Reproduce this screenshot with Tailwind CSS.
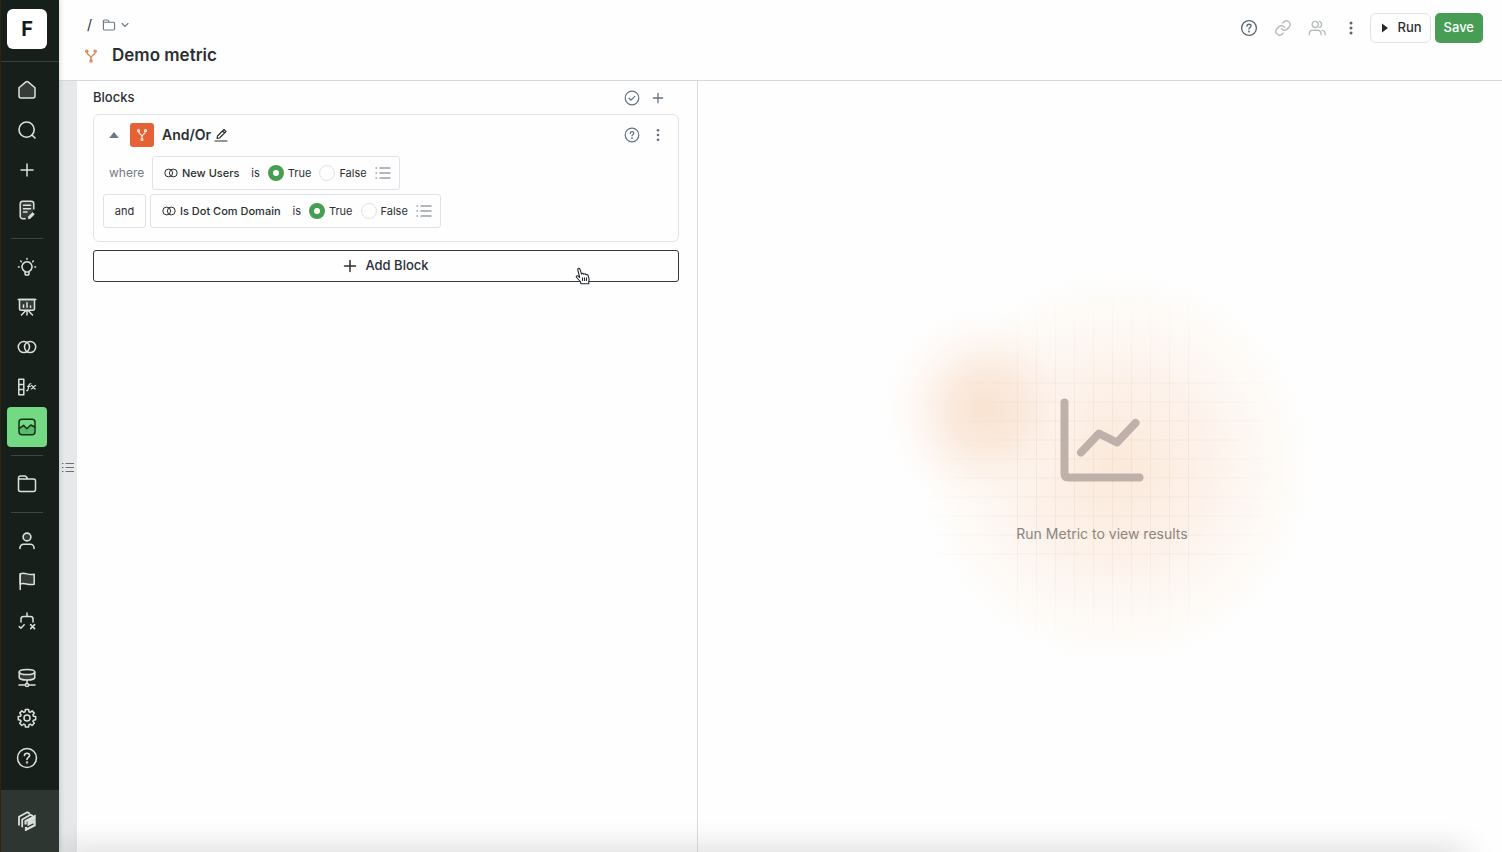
<!DOCTYPE html>
<html lang="en">
<head>
    <meta charset="UTF-8">
    <meta name="viewport" content="width=device-width, initial-scale=1.0">
    <title>Demo metric</title>
    <script src="https://cdn.jsdelivr.net/npm/@tailwindcss/browser@4"></script>
</head>
<body class="flex h-screen overflow-hidden bg-[#fefefe] font-['Inter','Liberation_Sans',sans-serif] text-[#2b2f33]">

    <!-- Sidebar -->
    <aside class="relative z-10 flex w-[59px] shrink-0 flex-col border-l border-[#2f2413] bg-[#161f19] text-[#dde1de] shadow-[0_0_6px_rgba(0,0,0,0.2)]">
        <div class="border-b border-[#3d4039] pt-[9px] pb-3 pl-[6px]">
            <a href="#" class="flex size-10 items-center justify-center rounded-md bg-white text-xl font-bold text-[#16191c]">F</a>
        </div>
        <nav class="flex grow flex-col pt-2 pl-[6px]">
            <a href="#" aria-label="Home" class="flex size-10 items-center justify-center">
                <svg class="size-5" viewBox="0 0 20 20" fill="none" stroke="currentColor" stroke-width="1.5" stroke-linejoin="round"><path fill="#363d38" d="M2 7.8 8.9 1.9a1.7 1.7 0 0 1 2.2 0L18 7.8V16a2 2 0 0 1-2 2H4a2 2 0 0 1-2-2z"/></svg>
            </a>
            <a href="#" aria-label="Search" class="flex size-10 items-center justify-center">
                <svg class="size-5" viewBox="0 0 20 20" fill="none" stroke="currentColor" stroke-width="1.6" stroke-linecap="round"><circle cx="9.6" cy="9.6" r="7.6"/><path d="m15 15 3 3"/></svg>
            </a>
            <button aria-label="New" class="flex size-10 items-center justify-center">
                <svg class="size-5" viewBox="0 0 20 20" fill="none" stroke="currentColor" stroke-width="1.5" stroke-linecap="round"><path d="M10 4v12M4 10h12"/></svg>
            </button>
            <a href="#" aria-label="Notes" class="flex size-10 items-center justify-center">
                <svg class="size-5" viewBox="0 0 20 20" fill="none" stroke="currentColor" stroke-width="1.5" stroke-linecap="round" stroke-linejoin="round"><path fill="#363d38" stroke="none" d="M3 2h13v9l-6 7H3z"/><path d="M16.8 9V3.8a2.6 2.6 0 0 0-2.6-2.6H5.8a2.6 2.6 0 0 0-2.6 2.6v12.4a2.6 2.6 0 0 0 2.6 2.6h2.4M6.5 5.3h7M6.5 8.7h7M6.5 12.1h3.5"/><path fill="currentColor" stroke-width=".8" d="m11.3 18.5.3-2 4-3.9 1.7 1.7-4 3.9z"/></svg>
            </a>
            <hr class="my-2 ml-1 w-8 border-[#3d433e]">
            <a href="#" aria-label="Insights" class="flex size-10 items-center justify-center">
                <svg class="size-5" viewBox="0 0 20 20" fill="none" stroke="currentColor" stroke-width="1.5" stroke-linecap="round" stroke-linejoin="round"><path d="M8 14.4a5 5 0 1 1 4 0v2.4a1.2 1.2 0 0 1-1.2 1.2H9.2A1.2 1.2 0 0 1 8 16.8zM8 15h4M10 1.4v.8M1.4 10h.8M17.8 10h.8M3.7 4l.6.6M16.3 4l-.6.6"/></svg>
            </a>
            <a href="#" aria-label="Dashboards" class="flex size-10 items-center justify-center">
                <svg class="size-5" viewBox="0 0 20 20" fill="none" stroke="currentColor" stroke-width="1.5" stroke-linecap="round" stroke-linejoin="round"><path fill="#363d38" d="M2.5 2.5h15v9.3a1.5 1.5 0 0 1-1.5 1.5H4a1.5 1.5 0 0 1-1.5-1.5z"/><path d="M1.2 2.5h17.6M6.500 8v2.300M10 5.800v4.500M13.500 9v1.300M8.800 13.500 4.500 18M11.200 13.500l4.300 4.500M10 13.500V18"/></svg>
            </a>
            <a href="#" aria-label="Cohorts" class="flex size-10 items-center justify-center">
                <svg class="size-5" viewBox="0 0 20 20" fill="none" stroke="currentColor" stroke-width="1.5"><circle cx="6.9" cy="10" r="5.6"/><circle cx="13.1" cy="10" r="5.6"/></svg>
            </a>
            <a href="#" aria-label="Properties" class="flex size-10 items-center justify-center">
                <svg class="size-5" viewBox="0 0 20 20" fill="none" stroke="currentColor" stroke-width="1.5" stroke-linecap="round" stroke-linejoin="round"><path d="M1.800 2.200h5v15.600h-5zM1.800 7.400h5M1.800 12.600h5"/><path stroke-width="1.2" d="M13.900 6.900c-1.400-.5-1.800.4-2 1.500l-.8 4c-.2 1-.6 1.500-1.500 1.200M10.600 9.300h2.800M14.500 8.600c1.800-.6 1.600 3.800 3.800 3.300M18.600 8.600c-1.600-.3-2.600 3.400-4.400 3.300"/></svg>
            </a>
            <a href="#" aria-label="Metrics" class="flex size-10 items-center justify-center rounded-[4px] bg-[#73da83] text-[#14301b]">
                <svg class="size-5" viewBox="0 0 20 20" fill="none" stroke="currentColor" stroke-width="1.5" stroke-linecap="round" stroke-linejoin="round"><path fill="#5bb96b" stroke="none" d="m2.500 11.500 4-2.800 3.200 3.200 3.800-3.700 4 2v5L15 17.500H4l-1.500-1.500z"/><rect x="2" y="2.200" width="16" height="15.600" rx="3"/><path d="m2.300 11.300 4.300-3 3.200 3.500 4-3.800 4 2"/></svg>
            </a>
            <hr class="my-2 ml-1 w-8 border-[#3d433e]">
            <a href="#" aria-label="Files" class="flex size-10 items-center justify-center">
                <svg class="size-5" viewBox="0 0 20 20" fill="none" stroke="currentColor" stroke-width="1.5" stroke-linejoin="round"><path d="M1.500 15.500V4a2 2 0 0 1 2-2h4.200a2 2 0 0 1 1.600.8l1.500 2.200h5.700a2 2 0 0 1 2 2v8.500a2 2 0 0 1-2 2h-13a2 2 0 0 1-2-2zM1.500 5h9"/></svg>
            </a>
            <hr class="my-2 ml-1 w-8 border-[#3d433e]">
            <a href="#" aria-label="Users" class="flex size-10 items-center justify-center">
                <svg class="size-5" viewBox="0 0 20 20" fill="none" stroke="currentColor" stroke-width="1.6" stroke-linecap="round"><circle fill="#363d38" cx="10" cy="6" r="3.9"/><path d="M3 17.500v-.7a3.600 3.600 0 0 1 3.600-3.600h6.800a3.600 3.600 0 0 1 3.600 3.600v.7"/></svg>
            </a>
            <a href="#" aria-label="Flags" class="flex size-10 items-center justify-center">
                <svg class="size-5" viewBox="0 0 20 20" fill="none" stroke="currentColor" stroke-width="1.5" stroke-linecap="round" stroke-linejoin="round"><path fill="#363d38" d="M3.200 3c4.800-2.600 7.800 2 14 .2v10c-6.200 1.800-9.200-2.400-14-.2z"/><path d="M3.200 3v15.500"/></svg>
            </a>
            <a href="#" aria-label="Experiments" class="flex size-10 items-center justify-center">
                <svg class="size-5" viewBox="0 0 20 20" fill="none" stroke="currentColor" stroke-width="1.5" stroke-linecap="round" stroke-linejoin="round"><path d="M10 2v3.500M4 11V8a2.500 2.500 0 0 1 2.500-2.500h7A2.500 2.500 0 0 1 16 8v3M2.200 15.500l1.700 1.700 3.300-3.400M13.600 13.600l4 4M17.600 13.600l-4 4"/></svg>
            </a>
            <a href="#" aria-label="Data" class="mt-auto flex size-10 items-center justify-center">
                <svg class="size-5" viewBox="0 0 20 20" fill="none" stroke="currentColor" stroke-width="1.5" stroke-linecap="round"><path fill="#363d38" d="M2.200 4v5.500c0 1.400 3.500 2.600 7.800 2.600s7.800-1.200 7.800-2.600V4"/><ellipse cx="10" cy="4" rx="7.800" ry="2.600" fill="#161f19"/><path d="M10 12.500v3M2 17h6.200M11.800 17H18"/><circle cx="10" cy="17" r="1.600"/></svg>
            </a>
            <a href="#" aria-label="Settings" class="flex size-10 items-center justify-center">
                <svg class="size-5" viewBox="0 0 20 20" fill="none" stroke="currentColor" stroke-width="1.5" stroke-linejoin="round"><path d="M8.400 1.500h3.200l.4 2.300 1.200.5 1.900-1.400 2.200 2.200-1.400 1.900.5 1.200 2.300.4v3.200l-2.300.4-.5 1.200 1.400 1.900-2.200 2.200-1.900-1.400-1.200.5-.4 2.300H8.400L8 16.600l-1.200-.5-1.900 1.400-2.200-2.200 1.400-1.900-.5-1.200-2.300-.4V8.600l2.300-.4.5-1.200-1.400-1.900 2.200-2.200 1.900 1.400L8 3.800z"/><circle cx="10" cy="10" r="3"/></svg>
            </a>
            <a href="#" aria-label="Help" class="mb-3 flex size-10 items-center justify-center">
                <svg class="size-[22px]" viewBox="0 0 20 20" fill="none" stroke="currentColor" stroke-width="1.4" stroke-linecap="round"><circle cx="10" cy="10" r="8.600"/><path d="M7.600 7.800C7.700 6.400 8.700 5.600 10 5.600s2.400.9 2.400 2.100c0 1.700-2.400 1.800-2.400 3.600"/><circle cx="10" cy="14" r=".4"/></svg>
            </a>
        </nav>
        <button aria-label="Workspace" class="h-[62px] bg-[#2e3632] pl-4">
            <svg class="size-5" viewBox="0 0 20 20" fill="none" stroke="currentColor" stroke-width="1.800"><path d="M2 14.500V5.800L10.300 1.200l2.500 1.400M5.200 16.200V8.400l8.300-4.700 2.500 1.400"/><path stroke-width="2.200" d="M8.600 13.600v-3.500L17.600 5.400v2.200l-6 3.400v2.400l6-3.100v4L9 18.700v-2.600"/></svg>
        </button>
    </aside>

    <div class="flex min-w-0 grow flex-col">
        <!-- Header -->
        <header class="flex h-[81px] shrink-0 items-start justify-between border-b border-[#d3d9de] pt-[13px] pr-[19px] pl-6">
            <div>
                <div class="flex h-6 items-center gap-[10px] pl-1 text-sm">
                    <span>/</span>
                    <button class="flex items-center gap-[5px] text-[#6b7883]" aria-label="Choose folder">
                        <svg class="size-[14px]" viewBox="0 0 20 20" fill="none" stroke="currentColor" stroke-width="1.6" stroke-linejoin="round"><path d="M2 15.500V4.500a1.700 1.700 0 0 1 1.700-1.700h3.800c.6 0 1.100.3 1.500.8L10.500 6h6A1.700 1.700 0 0 1 18 7.700v7.800a1.700 1.700 0 0 1-1.700 1.700H3.700A1.700 1.700 0 0 1 2 15.500zM2 6h8"/></svg>
                        <svg class="size-2" viewBox="0 0 8 8" fill="none" stroke="currentColor" stroke-width="1.1" stroke-linecap="round"><path d="m1 2.500 3 3 3-3"/></svg>
                    </button>
                </div>
                <div class="mt-1 flex h-[29px] items-center gap-[13px]">
                    <svg class="size-4 text-[#e0834f]" viewBox="0 0 16 16" fill="none" stroke="currentColor" stroke-width="1.4"><circle cx="3.800" cy="3.200" r="1.100"/><circle cx="12.200" cy="3.200" r="1.100"/><circle cx="8" cy="13" r="1.100"/><path d="M4 4.500C4.300 7.500 8 7 8 10v2M12 4.500C11.700 7.500 8 7 8 10"/></svg>
                    <h1 class="text-[17px] font-semibold">Demo metric</h1>
                </div>
            </div>
            <div class="flex items-center gap-1">
                <div class="mr-[6px] flex items-center gap-4 text-[#5b6873]">
                    <button aria-label="Help">
                        <svg class="size-[18px]" viewBox="0 0 20 20" fill="none" stroke="currentColor" stroke-width="1.5" stroke-linecap="round"><circle cx="10" cy="10" r="8.200"/><path d="M7.700 8c0-1.300 1-2.200 2.300-2.200s2.300.8 2.300 2c0 1.600-2.300 1.700-2.300 3.300"/><circle cx="10" cy="13.800" r=".4"/></svg>
                    </button>
                    <button aria-label="Copy link" class="text-[#b9bdc0]">
                        <svg class="size-[18px]" viewBox="0 0 24 24" fill="none" stroke="currentColor" stroke-width="1.9" stroke-linecap="round" stroke-linejoin="round"><path d="M10 13a5 5 0 0 0 7.500.5l3-3a5 5 0 0 0-7-7l-1.800 1.700M14 11a5 5 0 0 0-7.500-.5l-3 3a5 5 0 0 0 7 7l1.700-1.700"/></svg>
                    </button>
                    <button aria-label="Share" class="text-[#b9bdc0]">
                        <svg class="size-[18px]" viewBox="0 0 20 20" fill="none" stroke="currentColor" stroke-width="1.5" stroke-linecap="round"><circle cx="8" cy="6" r="3.400"/><path d="M1.500 17.500V16A3.500 3.500 0 0 1 5 12.500h6a3.500 3.500 0 0 1 3.500 3.500v1.500M12.500 2.700a3.400 3.400 0 0 1 0 6.600M15.500 12.600a3.500 3.500 0 0 1 3.500 3.400v1.500"/></svg>
                    </button>
                    <button aria-label="More">
                        <svg class="size-[18px]" viewBox="0 0 18 18" fill="currentColor"><circle cx="9" cy="4" r="1.500"/><circle cx="9" cy="9" r="1.500"/><circle cx="9" cy="14" r="1.500"/></svg>
                    </button>
                </div>
                <button class="flex h-[30px] items-center gap-2 rounded-md border border-[#dfe3e8] pr-2 pl-[10px] text-[13px] font-medium">
                    <svg class="h-3 w-2" viewBox="0 0 8 12" fill="#25292d"><path d="M1 1.500 7 6 1 10.500z"/></svg>
                    Run
                </button>
                <button class="h-[30px] rounded-[5px] bg-[#479d53] px-[9px] text-[13px] font-medium text-white">Save</button>
            </div>
        </header>

        <div class="grid min-h-0 grow grid-cols-[18px_621fr_804fr]">
            <button aria-label="Show list" class="flex items-center justify-center bg-[#e6e8e9] text-[#66707a]">
                <svg class="h-3 w-[14px]" viewBox="0 0 14 12" fill="none" stroke="currentColor" stroke-width="1.2"><path d="M1 2.500h1.500M1 6.500h1.500M1 10.500h1.500M4.500 2.500H13M4.500 6.500H13M4.500 10.500H13"/></svg>
            </button>

            <!-- Blocks -->
            <main class="min-w-0 border-r border-[#d9dee4] pr-[18px] pl-4">
                <div class="flex h-[33px] items-center justify-between pr-[13px]">
                    <h2 class="text-[13px] font-medium">Blocks</h2>
                    <div class="flex items-center gap-[10px] text-[#66707a]">
                        <button aria-label="Validate"><svg class="size-4" viewBox="0 0 16 16" fill="none" stroke="currentColor" stroke-width="1.2" stroke-linecap="round"><circle cx="8" cy="8" r="6.800"/><path d="m5 8.300 2 1.900 3.800-3.900"/></svg></button>
                        <button aria-label="Add block"><svg class="size-4" viewBox="0 0 16 16" fill="none" stroke="currentColor" stroke-width="1.3" stroke-linecap="round"><path d="M8 3.300v9.400M3.300 8h9.400"/></svg></button>
                    </div>
                </div>

                <section class="rounded-md border border-[#dfe3ea] pt-2 pr-3 pb-[13px] pl-[9px]">
                    <div class="flex h-6 items-center pl-[6px]">
                        <button aria-label="Collapse"><svg class="h-2 w-[10px]" viewBox="0 0 10 8" fill="#687989"><path d="M5 1 9.800 7H.2z"/></svg></button>
                        <span class="ml-[11px] flex size-6 items-center justify-center rounded-[3px] bg-[#e66236] text-[#ffe9df]">
                            <svg class="size-4" viewBox="0 0 16 16" fill="none" stroke="currentColor" stroke-width="1.2"><circle cx="4.500" cy="3.700" r="1"/><circle cx="11.500" cy="3.700" r="1"/><circle cx="8" cy="12.500" r="1"/><path d="M4.700 4.800C4.900 7.500 8 7 8 9.700v1.900M11.300 4.800C11.100 7.500 8 7 8 9.700"/></svg>
                        </span>
                        <h3 class="ml-2 text-sm font-semibold">And/Or</h3>
                        <button aria-label="Rename" class="ml-[3px]"><svg class="size-[14px]" viewBox="0 0 14 14" fill="none" stroke="currentColor" stroke-width="1.2" stroke-linecap="round" stroke-linejoin="round"><path d="M3 10.500 3.500 8 10 1.500l2 2L5.500 10zM8.500 3l2 2M1 13h12"/></svg></button>
                        <div class="ml-auto flex items-center gap-[10px] text-[#66707a]">
                            <button aria-label="Help"><svg class="size-4" viewBox="0 0 16 16" fill="none" stroke="currentColor" stroke-width="1.2" stroke-linecap="round"><circle cx="8" cy="8" r="6.800"/><path d="M6.200 6.400c0-1 .8-1.700 1.800-1.700s1.800.6 1.800 1.600c0 1.200-1.800 1.300-1.800 2.600"/><circle cx="8" cy="11.200" r=".3"/></svg></button>
                            <button aria-label="More"><svg class="size-4" viewBox="0 0 16 16" fill="currentColor"><circle cx="8" cy="3.200" r="1.300"/><circle cx="8" cy="8" r="1.300"/><circle cx="8" cy="12.800" r="1.300"/></svg></button>
                        </div>
                    </div>

                    <div class="mt-[9px] flex items-center text-[11px]">
                        <span class="w-[49px] pl-[6px] text-xs text-[#737a80]">where</span>
                        <div class="flex h-[34px] items-center rounded-[3px] border border-[#dfe3e8] px-2 pl-[11px]">
                            <svg class="size-[14px]" viewBox="0 0 14 14" fill="none" stroke="currentColor" stroke-width="1"><circle cx="4.700" cy="7" r="3.900"/><circle cx="9.300" cy="7" r="3.900"/></svg>
                            <span class="ml-1 font-medium">New Users</span>
                            <span class="mr-2 ml-3">is</span>
                            <label class="flex items-center gap-1"><input type="radio" name="newUsers" checked class="size-4 appearance-none rounded-full border border-[#dfe3e8] checked:border-[5px] checked:border-[#479d53]">True</label>
                            <label class="ml-2 flex items-center gap-1"><input type="radio" name="newUsers" class="size-4 appearance-none rounded-full border border-[#dfe3e8] checked:border-[5px] checked:border-[#479d53]">False</label>
                            <button aria-label="Pick values" class="ml-2 text-[#66737f]"><svg class="size-4" viewBox="0 0 16 16" fill="none" stroke="currentColor" stroke-width="1.2"><path d="M.5 3H2M.5 8H2M.5 13H2M4.500 3h11M4.500 8h11M4.500 13h11"/></svg></button>
                        </div>
                    </div>
                    <div class="mt-1 flex items-center gap-1 text-[11px]">
                        <button class="h-[34px] w-[43px] rounded-[3px] border border-[#dfe3e8]">and</button>
                        <div class="flex h-[34px] items-center rounded-[3px] border border-[#dfe3e8] px-2 pl-[11px]">
                            <svg class="size-[14px]" viewBox="0 0 14 14" fill="none" stroke="currentColor" stroke-width="1"><circle cx="4.700" cy="7" r="3.900"/><circle cx="9.300" cy="7" r="3.900"/></svg>
                            <span class="ml-1 font-medium">Is Dot Com Domain</span>
                            <span class="mr-2 ml-3">is</span>
                            <label class="flex items-center gap-1"><input type="radio" name="dotCom" checked class="size-4 appearance-none rounded-full border border-[#dfe3e8] checked:border-[5px] checked:border-[#479d53]">True</label>
                            <label class="ml-2 flex items-center gap-1"><input type="radio" name="dotCom" class="size-4 appearance-none rounded-full border border-[#dfe3e8] checked:border-[5px] checked:border-[#479d53]">False</label>
                            <button aria-label="Pick values" class="ml-2 text-[#66737f]"><svg class="size-4" viewBox="0 0 16 16" fill="none" stroke="currentColor" stroke-width="1.2"><path d="M.5 3H2M.5 8H2M.5 13H2M4.500 3h11M4.500 8h11M4.500 13h11"/></svg></button>
                        </div>
                    </div>
                </section>

                <button class="relative mt-2 flex h-8 w-full items-center justify-center gap-2 rounded-[3px] border border-[#34383c] text-[13px] font-medium">
                    <svg class="size-[14px]" viewBox="0 0 14 14" fill="none" stroke="currentColor" stroke-width="1.5" stroke-linecap="round"><path d="M7 1.500v11M1.500 7h11"/></svg>
                    Add Block
                    <!-- Pointer -->
                    <svg class="absolute top-4 right-[87px] h-[18px] w-4" viewBox="0 0 16 18" fill="#fff" stroke="#25292d" stroke-width="1.1" stroke-linejoin="round"><path d="M6 16.800 5.300 14.500 1.600 10.500c-1-1.400.6-2.300 1.600-1.300l1.500 1.300L2.800 3C2.400 1.200 4.400.6 5 2.300l1.600 4.900c.3-1.200 1.900-1 2.200.1.500-.9 1.900-.7 2.200.5.600-.7 1.800-.4 2.100.7l.9 3.200c.3 1.300-.2 2.300-.3 3.200l.1 1.900z"/><path d="M7.500 10.500v3.500M9.500 10.500v3.500M11.500 10.500v3.500"/></svg>
                </button>
            </main>

            <!-- Results -->
            <section class="relative flex min-w-0 flex-col items-center justify-center pt-[10px] pl-1">
                <svg class="absolute inset-0 m-auto h-[420px] w-[440px]" viewBox="0 0 440 420">
                    <defs>
                        <radialGradient id="glow">
                            <stop offset="0" stop-color="#fbe8d8" stop-opacity=".95"/>
                            <stop offset=".4" stop-color="#fdf0e7" stop-opacity=".95"/>
                            <stop offset=".65" stop-color="#fdf5f0" stop-opacity=".85"/>
                            <stop offset=".85" stop-color="#fefaf5" stop-opacity=".7"/>
                            <stop offset="1" stop-color="#fffcf9" stop-opacity="0"/>
                        </radialGradient>
                        <radialGradient id="spot">
                            <stop offset="0" stop-color="#f9e3d1"/>
                            <stop offset=".35" stop-color="#fae7d9" stop-opacity=".85"/>
                            <stop offset=".7" stop-color="#fdf2ea" stop-opacity=".5"/>
                            <stop offset="1" stop-color="#fffaf5" stop-opacity="0"/>
                        </radialGradient>
                        <linearGradient id="fadeX" gradientUnits="userSpaceOnUse" x1="30" y1="0" x2="410" y2="0">
                            <stop offset="0" stop-color="#e5d5c6" stop-opacity="0"/>
                            <stop offset=".35" stop-color="#e5d5c6" stop-opacity=".35"/>
                            <stop offset=".65" stop-color="#e5d5c6" stop-opacity=".35"/>
                            <stop offset="1" stop-color="#e5d5c6" stop-opacity="0"/>
                        </linearGradient>
                        <linearGradient id="fadeY" gradientUnits="userSpaceOnUse" x1="0" y1="30" x2="0" y2="390">
                            <stop offset="0" stop-color="#e5d5c6" stop-opacity="0"/>
                            <stop offset=".35" stop-color="#e5d5c6" stop-opacity=".35"/>
                            <stop offset=".65" stop-color="#e5d5c6" stop-opacity=".35"/>
                            <stop offset="1" stop-color="#e5d5c6" stop-opacity="0"/>
                        </linearGradient>
                    </defs>
                    <circle cx="237" cy="211" r="198" fill="url(#glow)"/>
                    <circle cx="106" cy="153" r="104" fill="url(#spot)"/>
                    <path stroke="url(#fadeX)" d="M30 126h380M30 145h380M30 164h380M30 183h380M30 202h380M30 221h380M30 240h380M30 259h380M30 278h380M30 297h380"/>
                    <path stroke="url(#fadeY)" d="M137.500 30v360M156.500 30v360M175.500 30v360M194.500 30v360M213.500 30v360M232.500 30v360M251.500 30v360M270.500 30v360M289.500 30v360M308.500 30v360"/>
                </svg>
                <svg class="relative size-[84px]" viewBox="0 0 84 84" fill="none" stroke="#bfb1a9" stroke-width="8" stroke-linecap="round" stroke-linejoin="round"><path d="M4.500 4.500v71q0 4 4 4h71M21 54.500l18-19 18 9L75.500 25"/></svg>
                <p class="relative mt-10 text-sm leading-6 text-[#8b8580]">Run Metric to view results</p>
            </section>
        </div>
    </div>

    <!-- Shade along the bottom edge -->
    <div class="pointer-events-none fixed right-9 -bottom-5 left-[59px] h-5 shadow-[0_0_32px_rgba(0,0,0,0.2)]"></div>
</body>
</html>
